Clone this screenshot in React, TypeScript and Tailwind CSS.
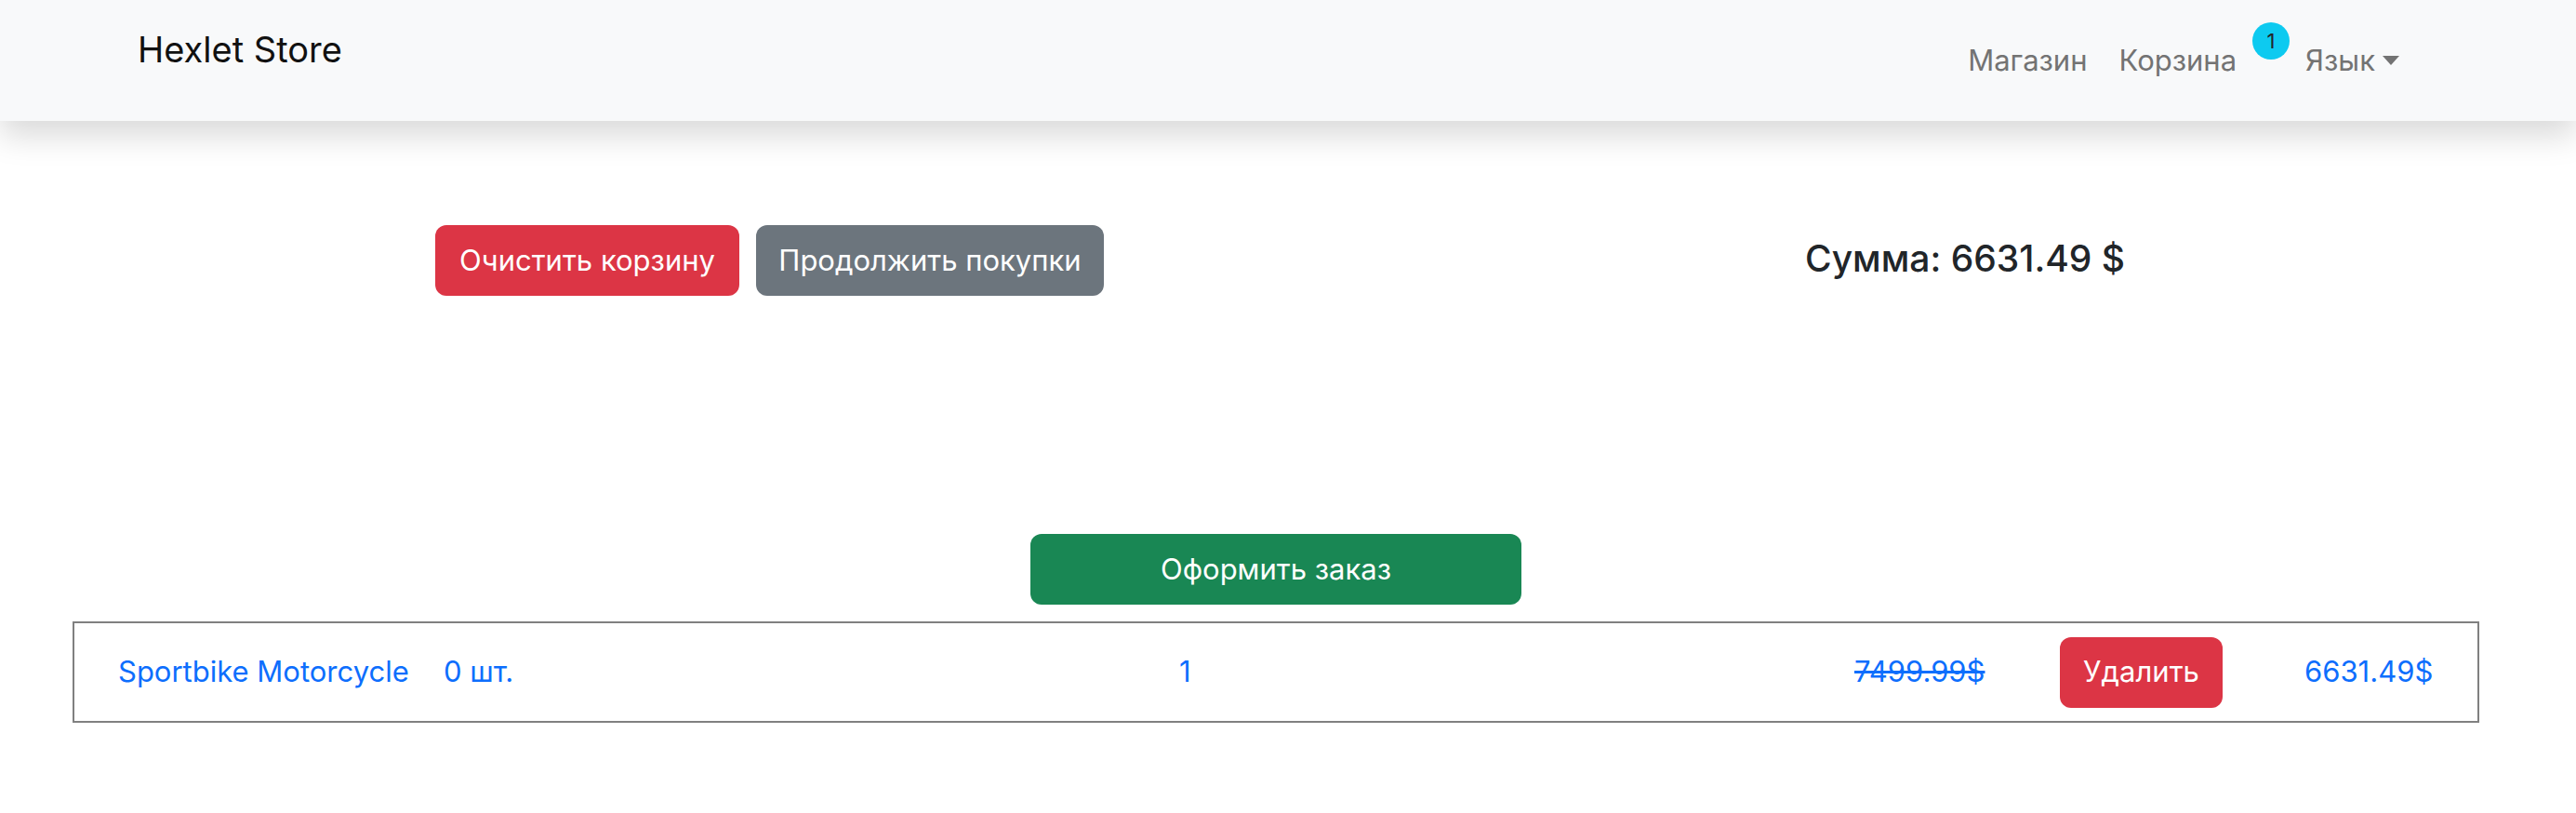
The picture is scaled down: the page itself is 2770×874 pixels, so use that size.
import React from 'react';

const font = { fontFamily: 'Inter, "Liberation Sans", sans-serif' };

const NavLink = ({ children }: { children: React.ReactNode }) => (
    <a className="text-[31px] leading-[48px] text-[#737373]">{children}</a>
);

const Navbar = () => (
    <nav className="relative z-10 h-[130px] bg-[#f8f9fa] shadow-[0_16px_32px_rgba(0,0,0,0.15)] flex items-center justify-between pl-[148px] pr-[190px]">
        <span className="text-[38px] leading-[48px] text-[#111] -mt-[24px]">Hexlet Store</span>
        <div className="flex items-center">
            <NavLink>Магазин</NavLink>
            <div className="ml-[34px] flex items-center">
                <NavLink>Корзина</NavLink>
                <span className="relative -top-[21px] ml-[17px] w-[40px] h-[40px] rounded-full bg-[#0dcaf0] text-[#212529] text-[22px] flex items-center justify-center">1</span>
            </div>
            <div className="ml-[17px] flex items-center">
                <NavLink>Язык</NavLink>
                <span className="ml-[8px] w-0 h-0 border-l-[9px] border-r-[9px] border-t-[10px] border-l-transparent border-r-transparent border-t-[#737373]" />
            </div>
        </div>
    </nav>
);

const Btn = ({ children, className }: { children: React.ReactNode; className: string }) => (
    <button type="button" className={`h-[76px] rounded-[12px] text-white text-[31px] ${className}`}>{children}</button>
);

const CartRow = () => (
    <div className="border-2 border-[#808080] h-[109px] flex items-center pl-[47px] text-[31px] text-[#0d6efd]">
        <span className="w-[350px]">Sportbike Motorcycle</span>
        <span className="w-[791px]">0 шт.</span>
        <span className="w-[726px]">1</span>
        <span className="w-[221px] line-through">7499.99$</span>
        <Btn className="w-[175px] bg-[#dc3545]">Удалить</Btn>
        <span className="ml-[88px]">6631.49$</span>
    </div>
);

export default function App() {
    return (
        <div className="min-h-[874px] bg-white text-[#212529]" style={font}>
            <Navbar />
            <main className="ml-[78px] w-[2588px] pt-[112px]">
                <div className="flex items-center">
                    <div className="pl-[390px] flex gap-[18px]">
                        <Btn className="w-[327px] bg-[#dc3545]">Очистить корзину</Btn>
                        <Btn className="w-[374px] bg-[#6c757d]">Продолжить покупки</Btn>
                    </div>
                    <h4 className="ml-[754px] -mt-[4px] text-[39px] font-medium">Сумма: 6631.49 $</h4>
                </div>
                <div className="flex justify-center mt-[256px] mb-[18px]">
                    <Btn className="w-[528px] bg-[#198754]">Оформить заказ</Btn>
                </div>
                <CartRow />
            </main>
        </div>
    );
}
